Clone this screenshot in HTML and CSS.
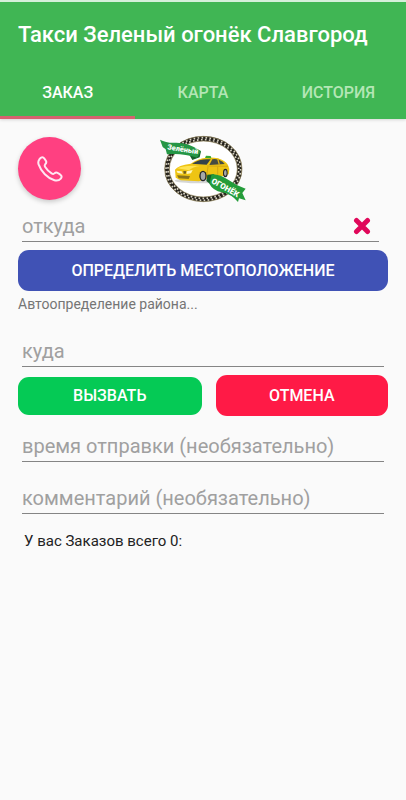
FILE: index.html
```
<!DOCTYPE html>
<html lang="ru">
<head>
  <meta charset="utf-8">
  <meta name="viewport" content="width=device-width, initial-scale=1">
  <title>Такси Зеленый огонёк Славгород</title>
  <link rel="stylesheet" href="styles.css">
</head>
<body>

  <header class="header">
    <h1>Такси Зеленый огонёк Славгород</h1>
    <nav class="tabs">
      <a href="#order" class="active">ЗАКАЗ</a>
      <a href="#map">КАРТА</a>
      <a href="#history">ИСТОРИЯ</a>
    </nav>
  </header>

  <main id="order">
    <div class="top-row">
      <button class="call-btn" type="button" aria-label="Позвонить">
        <svg viewBox="0 0 26 26" width="26" height="26">
          <path d="M2.2 3.6 C3 2.2 4.6 1 6 1.4 C7 1.8 8.2 3.6 9 5 C9.8 6.5 9.2 7.3 8.2 8.3 C7.5 9.1 7.6 10 8.2 11 C9.8 13.6 12 15.8 14.6 17.4 C15.8 18.1 16.6 18.2 17.4 17.4 C18.4 16.4 19.3 16 20.6 16.8 C22 17.6 23.6 18.8 24.2 19.6 C24.9 20.7 24.6 21.7 23.8 22.6 C22.2 24.4 20 25 17.4 24.2 C10.6 22.2 4 15.4 1.6 8.4 C1 6.4 1.2 5 2.2 3.6 Z"/>
        </svg>
      </button>

      <svg class="logo" viewBox="20 20 270 210" width="90" height="70" role="img" aria-label="Зелёный огонёк">
        <ellipse cx="156" cy="122" rx="109" ry="91" fill="#fff" stroke="#25221b" stroke-width="14"/>
        <ellipse cx="156" cy="122" rx="112" ry="94" fill="none" stroke="#d8d3c4" stroke-width="5" stroke-dasharray="5 7"/>
        <ellipse cx="156" cy="122" rx="106" ry="88" fill="none" stroke="#d8d3c4" stroke-width="5" stroke-dasharray="5 7" stroke-dashoffset="6"/>
        <ellipse cx="156" cy="122" rx="116" ry="98" fill="none" stroke="#8d7f55" stroke-width="2"/>
        <ellipse cx="156" cy="122" rx="102" ry="84" fill="none" stroke="#8d7f55" stroke-width="2"/>
        <!-- car -->
        <ellipse cx="148" cy="157" rx="78" ry="8" fill="#d5d6d5"/>
        <path d="M71 124 Q80 110 118 106 Q142 89 166 88 Q200 86 218 98 Q231 106 234 122 L232 138 L208 145 L174 148 L143 159 L88 156 L73 148 Z" fill="#eec413"/>
        <path d="M122 106 Q144 93 166 93 L178 93 L166 109 Z" fill="#34424a"/>
        <path d="M183 93 Q200 90 214 100 L220 107 L174 110 Z" fill="#464c42"/>
        <path d="M199 91 L204 109" stroke="#e0b516" stroke-width="4"/>
        <path d="M77 120 Q100 109 146 113 Q124 115 113 126 Z" fill="#ffe352"/>
        <path d="M167 113 L230 114 M170 116 L166 144 M199 115 L199 140" fill="none" stroke="#c79a16" stroke-width="2"/>
        <path d="M75 127 L91 129 L95 136 L79 134 Z M106 129 L124 125 L119 135 L106 137 Z" fill="#fff7bd"/>
        <path d="M77 141 L116 143 L112 152 L82 150 Z" fill="#8a7319"/>
        <path d="M96 128 L105 129 L103 136 L97 136 Z" fill="#6a5a20"/>
        <ellipse cx="155" cy="143" rx="11" ry="16" fill="#25272a"/>
        <ellipse cx="155" cy="143" rx="7" ry="12" fill="#a5a8a9"/>
        <ellipse cx="222" cy="134" rx="7" ry="13" fill="#25272a"/>
        <ellipse cx="222" cy="134" rx="4" ry="9" fill="#a5a8a9"/>
        <path d="M161 89 L164 82 L178 83 L180 90 Z" fill="#37a732"/>
        <!-- ribbons -->
        <path d="M130 63 L149 69 L145 87 L123 95 L113 78 Z" fill="#16602a"/>
        <path d="M26 34 Q46 45 75 43 Q112 43 149 68 L137 88 Q91 73 47 78 L43 63 L34 56 Z" fill="#259645"/>
        <path d="M168 139 L188 138 L197 157 L181 171 L165 158 Z" fill="#16602a"/>
        <path d="M181 138 Q206 137 233 156 Q256 173 283 181 L273 194 L283 216 L263 210 L260 221 Q241 198 212 192 Q185 187 174 166 Z" fill="#249c3a"/>
        <text class="logo-text-small" x="47" y="63" transform="rotate(9 47 63)">Зелёный</text>
        <text class="logo-text" x="178" y="163" transform="rotate(29 178 163)">ОГОНЁК</text>
      </svg>
    </div>

    <form>
      <div class="field field-from">
        <input type="text" placeholder="откуда" aria-label="откуда">
        <button class="clear-btn" type="button" aria-label="Очистить">
          <svg viewBox="0 0 18 18" width="18" height="18">
            <path d="M3.5 3.5 L14.5 14.5 M14.5 3.5 L3.5 14.5"/>
          </svg>
        </button>
      </div>

      <button class="btn btn-locate" type="button">ОПРЕДЕЛИТЬ МЕСТОПОЛОЖЕНИЕ</button>
      <p class="district">Автоопределение района...</p>

      <div class="field">
        <input type="text" placeholder="куда" aria-label="куда">
      </div>

      <div class="actions">
        <button class="btn btn-call" type="submit">ВЫЗВАТЬ</button>
        <button class="btn btn-cancel" type="reset">ОТМЕНА</button>
      </div>

      <div class="field field-time">
        <input type="text" placeholder="время отправки (необязательно)" aria-label="время отправки (необязательно)">
      </div>
      <div class="field field-comment">
        <input type="text" placeholder="комментарий (необязательно)" aria-label="комментарий (необязательно)">
      </div>
    </form>

    <p class="total">У вас Заказов всего 0:</p>
  </main>

</body>
</html>
```
FILE: styles.css
```
* {
  box-sizing: border-box;
}

body {
  font-family: Roboto, "Noto Sans", sans-serif;
  background-color: #fafafa;
  margin: 0;
}

.header {
  background-color: #40b654;
  border-top: 2px solid #d5f0da;
  box-shadow: 0 1px 3px rgba(0, 0, 0, 0.15);
}

h1 {
  margin: 0;
  padding: 0 18px;
  color: #fff;
  font-size: 22px;
  font-weight: 500;
  line-height: 66px;
  white-space: nowrap;
}

.tabs {
  display: grid;
  grid-template-columns: repeat(3, 1fr);
}

.tabs a {
  height: 51px;
  color: #b4e6b6;
  font-size: 16px;
  font-weight: 500;
  line-height: 50px;
  text-align: center;
  text-decoration: none;
}

.tabs .active {
  color: #fff;
  border-bottom: 3px solid #d6616f;
}

main {
  padding: 16px 18px;
}

.top-row {
  display: grid;
  grid-template-columns: 1fr auto 1fr;
  align-items: start;
}

.call-btn {
  display: flex;
  align-items: center;
  justify-content: center;
  width: 63px;
  height: 63px;
  margin-top: 2px;
  padding: 0;
  border: none;
  border-radius: 50%;
  background-color: #ff4081;
  box-shadow: 0 2px 5px rgba(0, 0, 0, 0.2);
  cursor: pointer;
}

.call-btn path {
  fill: none;
  stroke: #ffe8f2;
  stroke-width: 2;
}

.logo-text,
.logo-text-small {
  font-family: Roboto, sans-serif;
  font-weight: 900;
  fill: #fff;
}

.logo-text {
  font-size: 24px;
}

.logo-text-small {
  font-size: 22px;
}

.field {
  display: flex;
  align-items: center;
  height: 37px;
  margin: 0 4px;
  padding-top: 6px;
  border-bottom: 1px solid #858585;
}

.field input {
  flex: 1;
  min-width: 0;
  padding: 0;
  border: none;
  outline: none;
  background: none;
  color: #222;
  font-family: inherit;
  font-size: 20px;
}

.field input::placeholder {
  color: #a0a0a0;
  opacity: 1;
}

.field-from {
  margin-right: 9px;
}

.clear-btn {
  display: flex;
  padding: 0;
  margin-right: 8px;
  border: none;
  background: none;
  cursor: pointer;
}

.clear-btn path {
  stroke: #e0085a;
  stroke-width: 5;
  stroke-linecap: round;
}

.btn {
  height: 41px;
  padding: 0;
  border: none;
  border-radius: 11px;
  color: #fff;
  font-family: inherit;
  font-size: 16px;
  font-weight: 500;
  cursor: pointer;
}

.btn-locate {
  display: block;
  width: 100%;
  margin-top: 8px;
  background-color: #4052b5;
}

.district {
  margin: 4px 0 17px;
  color: #757575;
  font-size: 14px;
  line-height: 18px;
}

.actions {
  display: grid;
  grid-template-columns: 183fr 172fr;
  column-gap: 14px;
  align-items: center;
  margin-top: 8px;
}

.btn-call {
  height: 38px;
  background-color: #05ca55;
}

.btn-cancel {
  background-color: #ff1a46;
}

.field-time {
  margin-top: 9px;
}

.field-comment {
  margin-top: 15px;
}

.total {
  margin: 18px 6px;
  color: #222;
  font-size: 15px;
  line-height: 18px;
}
```
